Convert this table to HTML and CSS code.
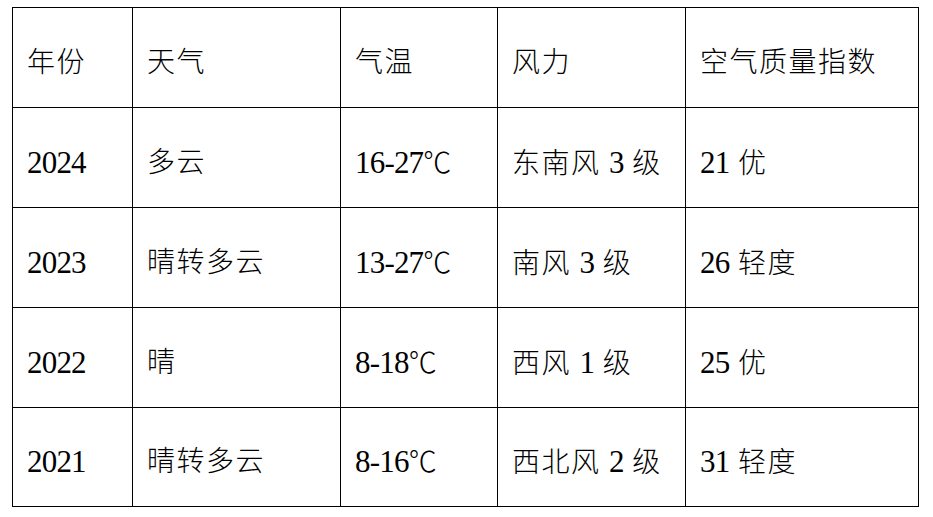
FILE: index.html
```html
<!DOCTYPE html>
<html lang="zh-CN">
<head>
<meta charset="utf-8">
<title>天气表</title>
<link rel="stylesheet" href="styles.css">
</head>
<body>
<table class="weather">
  <colgroup>
    <col class="c1"><col class="c2"><col class="c3"><col class="c4"><col class="c5">
  </colgroup>
  <tr><td>年份</td><td>天气</td><td>气温</td><td>风力</td><td>空气质量指数</td></tr>
  <tr><td><span class="n">2024</span></td><td>多云</td><td><span class="n">16-27</span>℃</td><td>东南风 <span class="n">3</span> 级</td><td><span class="n">21</span> 优</td></tr>
  <tr><td><span class="n">2023</span></td><td>晴转多云</td><td><span class="n">13-27</span>℃</td><td>南风 <span class="n">3</span> 级</td><td><span class="n">26</span> 轻度</td></tr>
  <tr><td><span class="n">2022</span></td><td>晴</td><td><span class="n">8-18</span>℃</td><td>西风 <span class="n">1</span> 级</td><td><span class="n">25</span> 优</td></tr>
  <tr class="last"><td><span class="n">2021</span></td><td>晴转多云</td><td><span class="n">8-16</span>℃</td><td>西北风 <span class="n">2</span> 级</td><td><span class="n">31</span> 轻度</td></tr>
</table>
</body>
</html>
```
FILE: styles.css
```css
html, body {
  margin: 0;
  background: #fff;
}
body {
  padding: 7px 0 0 12px;
  font-family: "Liberation Serif", "Noto Sans CJK SC", serif;
  color: #000;
}
.weather {
  border-collapse: collapse;
  table-layout: fixed;
  width: 906px;
}
.c1 { width: 120px; }
.c2 { width: 208px; }
.c3 { width: 157px; }
.c4 { width: 188px; }
.c5 { width: 233px; }
.weather td {
  border: 1px solid #000;
  height: 100px;
  box-sizing: border-box;
  padding: 10px 0 0 14px;
  vertical-align: middle;
  font-size: 28px;
  font-weight: 300;
  line-height: 1.2;
  letter-spacing: 1.5px;
  white-space: nowrap;
}
.weather tr.last td {
  height: 99px;
}
.weather .n {
  font-size: 31px;
  font-weight: 400;
  letter-spacing: -0.8px;
}
```
